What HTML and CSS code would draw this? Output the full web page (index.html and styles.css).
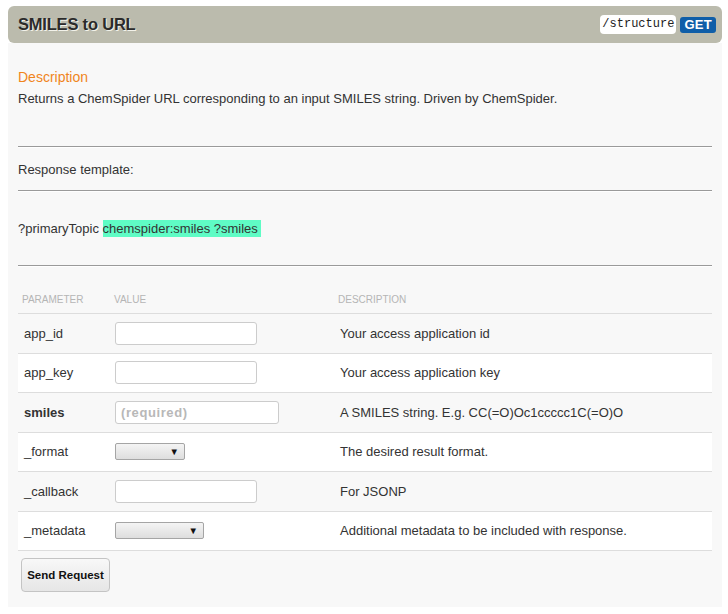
FILE: index.html
```html
<!DOCTYPE html>
<html>
<head>
<meta charset="utf-8">
<link rel="stylesheet" href="styles.css">
</head>
<body>
<div class="panel">
  <div class="head">
    <h2 class="title">SMILES to URL</h2>
    <div class="meta">
      <code class="path">/structure</code>
      <span class="verb">GET</span>
    </div>
  </div>
  <div class="content">
    <h3 class="desc-title">Description</h3>
    <p class="desc">Returns a ChemSpider URL corresponding to an input SMILES string. Driven by ChemSpider.</p>
    <hr class="rule rule-first">
    <p class="resp">Response template:</p>
    <hr class="rule rule-second">
    <p class="tpl">?primaryTopic <span class="hl">chemspider:smiles ?smiles&nbsp;</span></p>
    <hr class="rule rule-third">
    <table class="params">
      <thead>
        <tr>
          <th class="c-param">Parameter</th>
          <th class="c-value">Value</th>
          <th class="c-desc">Description</th>
        </tr>
      </thead>
      <tbody>
        <tr>
          <td class="c-param">app_id</td>
          <td class="c-value"><input class="field" type="text"></td>
          <td class="c-desc">Your access application id</td>
        </tr>
        <tr>
          <td class="c-param">app_key</td>
          <td class="c-value"><input class="field" type="text"></td>
          <td class="c-desc">Your access application key</td>
        </tr>
        <tr>
          <td class="c-param req">smiles</td>
          <td class="c-value"><input class="field field-req" type="text" placeholder="(required)"></td>
          <td class="c-desc">A SMILES string. E.g. CC(=O)Oc1ccccc1C(=O)O</td>
        </tr>
        <tr>
          <td class="c-param">_format</td>
          <td class="c-value"><span class="sel sel-format"><span class="arrow">&#9660;</span></span></td>
          <td class="c-desc">The desired result format.</td>
        </tr>
        <tr>
          <td class="c-param">_callback</td>
          <td class="c-value"><input class="field" type="text"></td>
          <td class="c-desc">For JSONP</td>
        </tr>
        <tr>
          <td class="c-param">_metadata</td>
          <td class="c-value"><span class="sel sel-meta"><span class="arrow">&#9660;</span></span></td>
          <td class="c-desc">Additional metadata to be included with response.</td>
        </tr>
      </tbody>
    </table>
    <button class="send" type="button">Send Request</button>
  </div>
</div>
</body>
</html>
```

FILE: styles.css
```css
html, body {
  margin: 0;
  padding: 0;
  background: #ffffff;
}

body {
  font-family: "Liberation Sans", Arial, sans-serif;
  font-size: 13px;
  color: #333333;
}

.panel {
  width: 714px;
  margin: 6px 0 0 8px;
}

.head {
  height: 37px;
  background: #bbbbad;
  border-radius: 6px;
  display: flex;
  align-items: center;
  justify-content: space-between;
  padding: 0 6px 0 10px;
  box-sizing: border-box;
}

.title {
  margin: 0;
  font-size: 16.5px;
  font-weight: bold;
  color: #2b2b2b;
  text-shadow: 1px 1px 0 #f2f2ea;
  letter-spacing: -0.2px;
}

.meta {
  display: flex;
  align-items: center;
  gap: 4px;
}

.path {
  font-family: "Liberation Mono", "Courier New", monospace;
  font-size: 12px;
  color: #222222;
  background: #ffffff;
  border-radius: 4px;
  height: 19px;
  line-height: 19px;
  padding: 0 2px;
}

.verb {
  background: #0f5ea8;
  color: #ffffff;
  font-weight: bold;
  font-size: 13px;
  border-radius: 3px;
  height: 16px;
  line-height: 16px;
  padding: 0 4px;
  letter-spacing: 0.3px;
}

.content {
  background: #f8f8f8;
  padding: 25px 10px 15px 10px;
}

.desc-title {
  margin: 0;
  font-size: 14px;
  font-weight: normal;
  line-height: 18px;
  color: #f0851c;
}

.desc {
  margin: 4px 0 0 0;
  line-height: 18px;
}

.rule {
  border: 0;
  height: 1px;
  background: #9a9a9a;
  border-bottom: 1px solid #ffffff;
  margin: 0;
}

.rule-first {
  margin-top: 38px;
}

.resp {
  margin: 13px 0 0 0;
  line-height: 18px;
}

.rule-second {
  margin-top: 11px;
}

.tpl {
  margin: 28px 0 0 0;
  line-height: 18px;
}

.hl {
  background: #5ffcc5;
  padding: 1px 0;
}

.rule-third {
  margin-top: 27px;
}

.params {
  width: 100%;
  border-collapse: collapse;
  margin-top: 18px;
}

.params th {
  font-size: 10px;
  font-weight: normal;
  text-transform: uppercase;
  color: #b5b5b5;
  text-align: left;
  height: 28px;
  padding: 0 0 0 4px;
  vertical-align: middle;
}

.params td {
  border-top: 1px solid #dddddd;
  height: 39.5px;
  padding: 0 0 0 6px;
  vertical-align: middle;
  box-sizing: border-box;
}

.params tbody tr:nth-child(even) td {
  background: #ffffff;
}

.params tbody tr:last-child td {
  border-bottom: 1px solid #dddddd;
}

.params .c-param {
  width: 88px;
}

.params .c-value {
  width: 219px;
  padding-left: 5px;
}

.params .c-desc {
  padding-left: 7px;
}

.params th.c-value {
  padding-left: 4px;
}

.params th.c-desc {
  padding-left: 5px;
}

.req {
  font-weight: bold;
}

.field {
  display: block;
  width: 142px;
  height: 23px;
  box-sizing: border-box;
  border: 1px solid #cccccc;
  border-radius: 3px;
  background: #ffffff;
  margin: 0;
  padding: 0 5px;
  font-family: "Liberation Sans", Arial, sans-serif;
}

.field-req {
  width: 164px;
  font-weight: bold;
  font-size: 13px;
  letter-spacing: 0.6px;
}

.field-req::placeholder {
  color: #b8b8b8;
}

.sel {
  display: block;
  position: relative;
  height: 17px;
  box-sizing: border-box;
  border: 1px solid #a5a5a5;
  border-radius: 2px;
  background: linear-gradient(#f4f4f4, #dedede);
}

.sel-format {
  width: 70px;
}

.sel-meta {
  width: 89px;
}

.arrow {
  position: absolute;
  right: 5px;
  top: 1px;
  font-size: 9.5px;
  line-height: 13px;
  color: #111111;
}

.send {
  display: block;
  margin: 7px 0 0 3px;
  width: 89px;
  height: 34px;
  border: 1px solid #c4c4c4;
  border-radius: 4px;
  background: linear-gradient(#f8f8f8, #e6e6e6);
  font-family: "Liberation Sans", Arial, sans-serif;
  font-weight: bold;
  font-size: 11.5px;
  color: #111111;
  padding: 0;
}
```
